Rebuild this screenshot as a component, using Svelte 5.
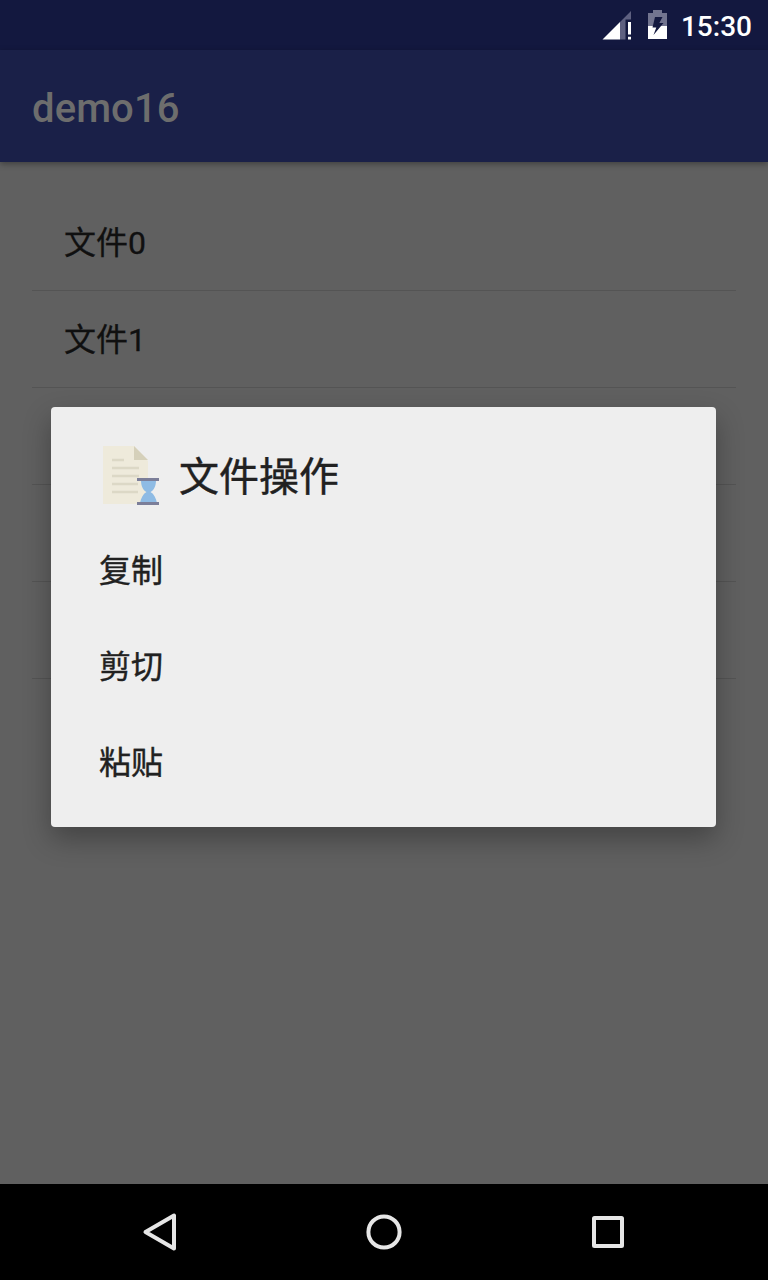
<script lang="ts">
  const files = [0, 1, 2, 3, 4].map((n) => '文件' + n)
  const actions = ['复制', '剪切', '粘贴']
</script>

<div class="screen">
  <header class="status">
    <svg class="signal" width="30" height="30" viewBox="0 0 30 30">
      <path d="M29 1V9.5H23.5V29.5H18V12Z" fill="#5e6080" />
      <path d="M18 12V29.5H.5Z" fill="#fff" />
      <path d="M26 12H29V24.6H26ZM26 26.8H29V29.5H26Z" fill="#fff" />
    </svg>
    <svg class="battery" width="20" height="30" viewBox="0 0 20 30">
      <path d="M0 3H5V0H14V3H19V16H0Z" fill="#72748f" />
      <path d="M0 16H19V29H0Z" fill="#fff" />
      <path d="M7 7H14.5L11.3 13H15.5L5.5 25L8.3 17.5H4.5Z" fill="#13183f" />
    </svg>
    <span class="clock">15:30</span>
  </header>

  <div class="appbar"><h1>demo16</h1></div>

  <main>
    <ul class="files">
      {#each files as file}
        <li>{file}</li>
      {/each}
    </ul>
  </main>

  <nav>
    <svg width="48" height="48" viewBox="0 0 48 48">
      <path d="M9.5 24L38 7.5V40.5Z" />
    </svg>
    <svg width="48" height="48" viewBox="0 0 48 48">
      <circle cx="24" cy="24" r="15.6" />
    </svg>
    <svg width="48" height="48" viewBox="0 0 48 48">
      <rect x="10" y="10" width="28" height="28" rx="0.5" />
    </svg>
  </nav>

  <div class="dialog" role="dialog" aria-label="文件操作">
    <div class="title">
      <svg class="doc" width="64" height="64" viewBox="0 0 64 64">
        <path d="M3 3H34L48 18V61H3Z" fill="#eeeadb" />
        <path d="M34 3L48 17H34Z" fill="#d5d0ba" />
        <path d="M12 17H24M12 25H39M12 33H39M12 41H38M12 49H38" stroke="#dcd8c6" stroke-width="2.6" />
        <path d="M41 37H56C56 43 54 47 50.5 49C54 51 56 55 57 60H40C41 55 43 51 46.500 49C43 47 41 43 41 37Z" fill="#8ebbe4" />
        <path d="M37 36.500H59M37 60.500H59" stroke="#7b7e99" stroke-width="3" />
      </svg>
      <h2>文件操作</h2>
    </div>
    <ul class="actions">
      {#each actions as action}
        <li>{action}</li>
      {/each}
    </ul>
  </div>
</div>

<style>
  :global(body) {
    margin: 0;
  }

  .screen {
    position: relative;
    display: flex;
    flex-direction: column;
    width: 768px;
    height: 1280px;
    overflow: hidden;
    background: #606060;
    font-family: Roboto, "Noto Sans CJK SC", sans-serif;
  }

  h1,
  h2,
  ul {
    margin: 0;
    padding: 0;
    list-style: none;
  }

  .status {
    display: flex;
    align-items: center;
    justify-content: flex-end;
    box-sizing: border-box;
    height: 50px;
    padding-right: 16px;
    background: #13183f;
    color: #fff;
  }

  .signal {
    margin-right: 16px;
  }

  .battery {
    margin-right: 13px;
  }

  .clock {
    padding-top: 3px;
    font-size: 28px;
    font-weight: 500;
    line-height: 32px;
  }

  .appbar {
    display: flex;
    align-items: center;
    height: 112px;
    padding: 4px 32px 0;
    box-sizing: border-box;
    background: #1a2048;
    box-shadow: 0 2px 6px rgba(0, 0, 0, 0.35);
  }

  h1 {
    color: #6d6d6d;
    font-size: 40px;
    font-weight: 500;
    letter-spacing: 0.1px;
  }

  main {
    flex: 1;
    padding: 32px;
  }

  .files li {
    box-sizing: border-box;
    height: 97px;
    padding: 1px 0 0 32px;
    border-bottom: 1px solid #545454;
    color: #101010;
    font-size: 32px;
    line-height: 96px;
    -webkit-text-stroke: 0.3px;
  }

  nav {
    display: flex;
    justify-content: center;
    align-items: center;
    gap: 176px;
    height: 96px;
    background: #000;
  }

  nav svg {
    fill: none;
    stroke: #e6e6e6;
    stroke-width: 4;
    stroke-linejoin: round;
  }

  .dialog {
    position: absolute;
    top: 407px;
    left: 51px;
    box-sizing: border-box;
    width: 665px;
    height: 420px;
    padding: 36px 48px 0;
    border-radius: 4px;
    background: #eee;
    box-shadow: 0 12px 28px rgba(0, 0, 0, 0.3);
    color: #212121;
    -webkit-text-stroke: 0.4px;
  }

  .title {
    display: flex;
    align-items: center;
    gap: 15px;
    height: 64px;
    margin-bottom: 16px;
    padding-left: 1px;
  }

  .doc {
    filter: blur(0.4px);
  }

  h2 {
    padding-top: 5px;
    font-size: 40px;
    font-weight: 400;
    line-height: 64px;
  }

  .actions li {
    height: 96px;
    font-size: 32px;
    line-height: 96px;
  }
</style>
